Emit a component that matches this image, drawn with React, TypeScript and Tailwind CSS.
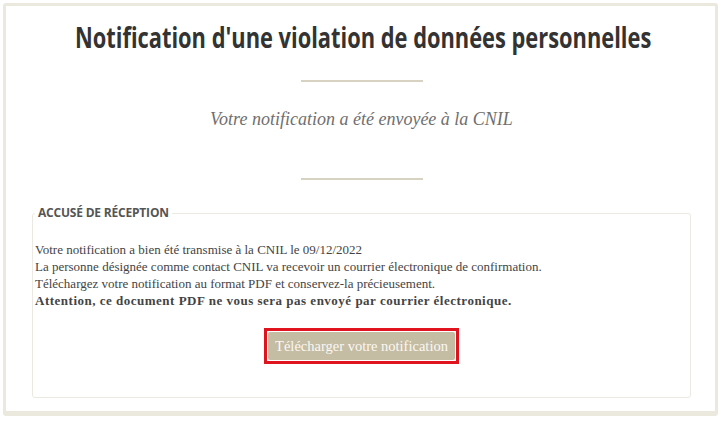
export default function App() {
  const serif = { fontFamily: '"Liberation Serif", "DejaVu Serif", serif' };
  return (
    <div className="min-h-[421px] w-[721px] bg-white p-[3px]">
      <div className="flex h-[413px] flex-col items-center rounded-[3px] border-[3px] border-b-[5px] border-[#ebe8dd] bg-white pl-[26px] pr-[24px]">
        {/* condensed title: no condensed face installed, so squeeze Open Sans */}
        <div className="mt-[13px] flex w-[574px] justify-start overflow-visible">
          <h1
            className="origin-left scale-x-[0.78] whitespace-nowrap text-[28px] font-bold leading-[36px] text-[#333]"
            style={{ fontFamily: '"Open Sans", sans-serif' }}
          >
            Notification d'une violation de données personnelles
          </h1>
        </div>
        <div className="mt-[25px] h-[2px] w-[122px] bg-[#d8d2c2]" />
        <p className="mt-[25px] text-[18px] italic leading-[24px] text-[#6f6f6f]" style={serif}>
          Votre notification a été envoyée à la CNIL
        </p>
        <div className="mt-[47px] h-[2px] w-[122px] bg-[#d8d2c2]" />

        <fieldset className="mb-[13px] mt-[25px] w-full flex-1 rounded-[3px] border border-[#ece9e2] px-[2px]">
          <legend
            className="px-[3px] text-[12px] font-bold uppercase leading-[16px] tracking-[-0.2px] text-[#555]"
            style={{ fontFamily: '"Open Sans", sans-serif' }}
          >
            Accusé de réception
          </legend>
          <div className="mt-[20px] text-[13px] leading-[17px] text-[#444]" style={serif}>
            <p>Votre notification a bien été transmise à la CNIL le 09/12/2022</p>
            <p>La personne désignée comme contact CNIL va recevoir un courrier électronique de confirmation.</p>
            <p>Téléchargez votre notification au format PDF et conservez-la précieusement.</p>
            <p className="font-bold tracking-[0.5px]">
              Attention, ce document PDF ne vous sera pas envoyé par courrier électronique.
            </p>
          </div>
          <div className="mt-[19px] flex justify-center">
            <div className="border-[3px] border-[#e0141e] p-px">
              <button
                className="rounded-[2px] bg-[#c5bca4] px-[7px] py-[5px] text-[14.5px] leading-[18px] text-[#faf8f3]"
                style={serif}
              >
                Télécharger votre notification
              </button>
            </div>
          </div>
        </fieldset>
      </div>
    </div>
  );
}
